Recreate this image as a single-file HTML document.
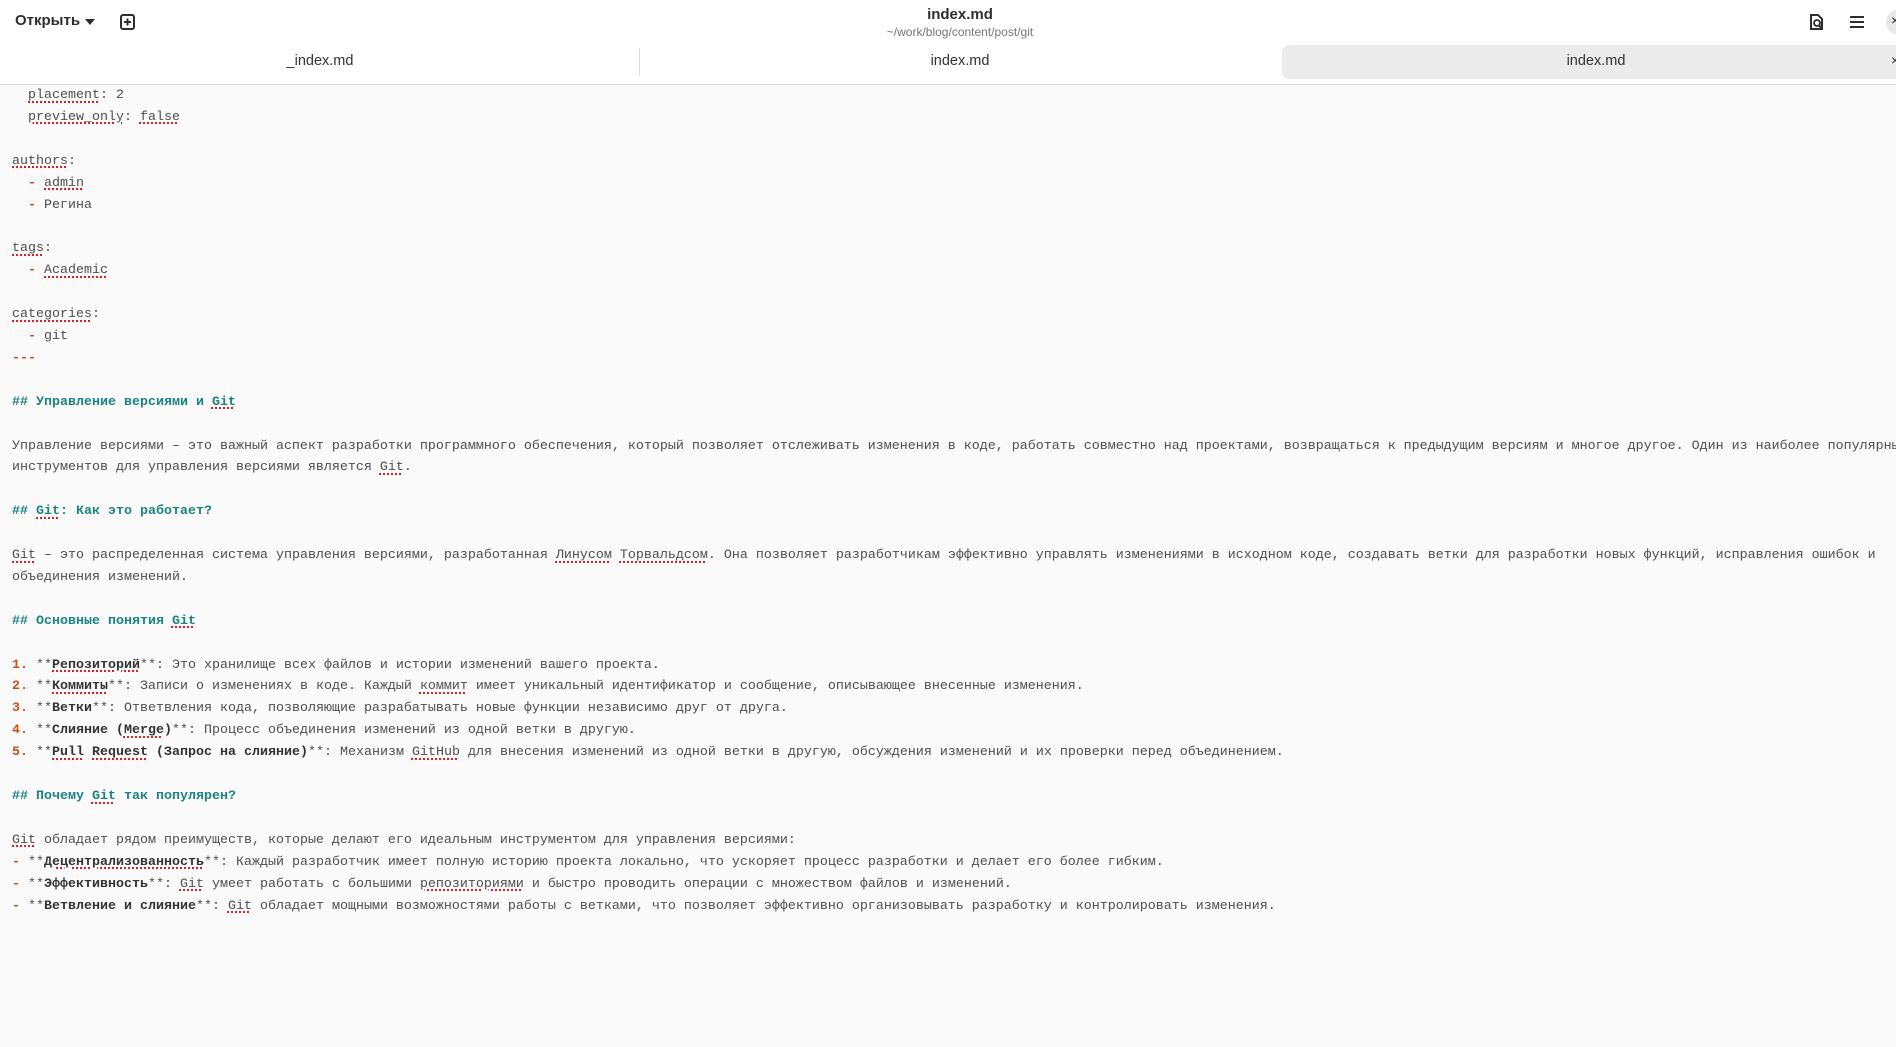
<!DOCTYPE html>
<html><head><meta charset="utf-8">
<style>
*{margin:0;padding:0;box-sizing:border-box}
html,body{width:1896px;height:1047px;overflow:hidden;background:#fafafa}
body{position:relative;font-family:"Liberation Sans",sans-serif}
#hdr{position:absolute;left:0;top:0;width:1896px;height:85px;background:#fff;border-bottom:1px solid #dcdcdc;z-index:2}
.abs{position:absolute}
#ed{position:absolute;left:12px;top:85px;width:1884px;font-family:"Liberation Mono",monospace;font-size:13.33px;line-height:21.9px;color:#4e4e4e;white-space:pre;overflow:hidden}
.h{color:#1c8383;font-weight:bold}
.m{color:#c8501a;font-weight:bold}
.b{font-weight:bold;color:#333}
.s{text-decoration:underline dotted #e01b24;text-decoration-thickness:2px;text-underline-offset:3px}
</style></head><body>
<div id="hdr">
  <div class="abs" style="left:15px;top:12px;font-size:15px;font-weight:bold;color:#2e2e2e">Открыть</div>
  <svg class="abs" style="left:83px;top:17px" width="14" height="10"><path d="M2 2 L12 2 L7 8 Z" fill="#2e2e2e"/></svg>
  <svg class="abs" style="left:119px;top:13px" width="18" height="18"><rect x="2" y="2" width="13" height="14" rx="2" fill="none" stroke="#2e2e2e" stroke-width="2"/><path d="M8.5 5.5v7M5 9h7" stroke="#2e2e2e" stroke-width="2"/></svg>
  <div class="abs" style="left:0;width:1920px;top:6px;text-align:center;font-size:15px;font-weight:bold;color:#2e2e2e">index.md</div>
  <div class="abs" style="left:0;width:1920px;top:25px;text-align:center;font-size:12px;color:#777">~/work/blog/content/post/git</div>
  <svg class="abs" style="left:1808px;top:13px" width="18" height="18"><path d="M3 2h7l4 4v10H3z" fill="none" stroke="#2e2e2e" stroke-width="2"/><circle cx="9" cy="10" r="3" fill="none" stroke="#2e2e2e" stroke-width="1.8"/><path d="M11 12l3 4" stroke="#2e2e2e" stroke-width="2"/></svg>
  <svg class="abs" style="left:1848px;top:14px" width="18" height="16"><path d="M2 3h14M2 8h14M2 13h14" stroke="#2e2e2e" stroke-width="2"/></svg>
  <div class="abs" style="left:1886px;top:9px;width:26px;height:26px;border-radius:13px;background:#e8e8e8"></div>
  <div class="abs" style="left:1891px;top:12px;font-size:14px;color:#2e2e2e">×</div>
  <div class="abs" style="left:1282px;top:45px;width:630px;height:34px;border-radius:7px;background:#ebebeb"></div>
  <div class="abs" style="left:639px;top:48px;width:1px;height:28px;background:#dcdcdc"></div>
  <div class="abs" style="left:0;width:640px;top:53px;text-align:center;font-size:14.5px;color:#333">_index.md</div>
  <div class="abs" style="left:640px;width:640px;top:53px;text-align:center;font-size:14.5px;color:#333">index.md</div>
  <div class="abs" style="left:1280px;width:632px;top:53px;text-align:center;font-size:14.5px;color:#333">index.md</div>
  <div class="abs" style="left:1891px;top:52px;font-size:14px;color:#333">×</div>
</div>
<div id="ed">  <span class="s">placement</span>: 2
  <span class="s">preview_only</span>: <span class="s">false</span>

<span class="s">authors</span>:
  <span class="m">-</span> <span class="s">admin</span>
  <span class="m">-</span> Регина

<span class="s">tags</span>:
  <span class="m">-</span> <span class="s">Academic</span>

<span class="s">categories</span>:
  <span class="m">-</span> git
<span class="m">---</span>

<span class="h">## Управление версиями и <span class="s">Git</span></span>

Управление версиями – это важный аспект разработки программного обеспечения, который позволяет отслеживать изменения в коде, работать совместно над проектами, возвращаться к предыдущим версиям и многое другое. Один из наиболее популярных
инструментов для управления версиями является <span class="s">Git</span>.

<span class="h">## <span class="s">Git</span>: Как это работает?</span>

<span class="s">Git</span> – это распределенная система управления версиями, разработанная <span class="s">Линусом</span> <span class="s">Торвальдсом</span>. Она позволяет разработчикам эффективно управлять изменениями в исходном коде, создавать ветки для разработки новых функций, исправления ошибок и
объединения изменений.

<span class="h">## Основные понятия <span class="s">Git</span></span>

<span class="m">1.</span> **<span class="b s">Репозиторий</span>**: Это хранилище всех файлов и истории изменений вашего проекта.
<span class="m">2.</span> **<span class="b s">Коммиты</span>**: Записи о изменениях в коде. Каждый <span class="s">коммит</span> имеет уникальный идентификатор и сообщение, описывающее внесенные изменения.
<span class="m">3.</span> **<span class="b">Ветки</span>**: Ответвления кода, позволяющие разрабатывать новые функции независимо друг от друга.
<span class="m">4.</span> **<span class="b">Слияние (<span class="s">Merge</span>)</span>**: Процесс объединения изменений из одной ветки в другую.
<span class="m">5.</span> **<span class="b"><span class="s">Pull</span> <span class="s">Request</span> (Запрос на слияние)</span>**: Механизм <span class="s">GitHub</span> для внесения изменений из одной ветки в другую, обсуждения изменений и их проверки перед объединением.

<span class="h">## Почему <span class="s">Git</span> так популярен?</span>

<span class="s">Git</span> обладает рядом преимуществ, которые делают его идеальным инструментом для управления версиями:
<span class="m">-</span> **<span class="b s">Децентрализованность</span>**: Каждый разработчик имеет полную историю проекта локально, что ускоряет процесс разработки и делает его более гибким.
<span class="m">-</span> **<span class="b">Эффективность</span>**: <span class="s">Git</span> умеет работать с большими <span class="s">репозиториями</span> и быстро проводить операции с множеством файлов и изменений.
<span class="m">-</span> **<span class="b">Ветвление и слияние</span>**: <span class="s">Git</span> обладает мощными возможностями работы с ветками, что позволяет эффективно организовывать разработку и контролировать изменения.</div>
</body></html>
